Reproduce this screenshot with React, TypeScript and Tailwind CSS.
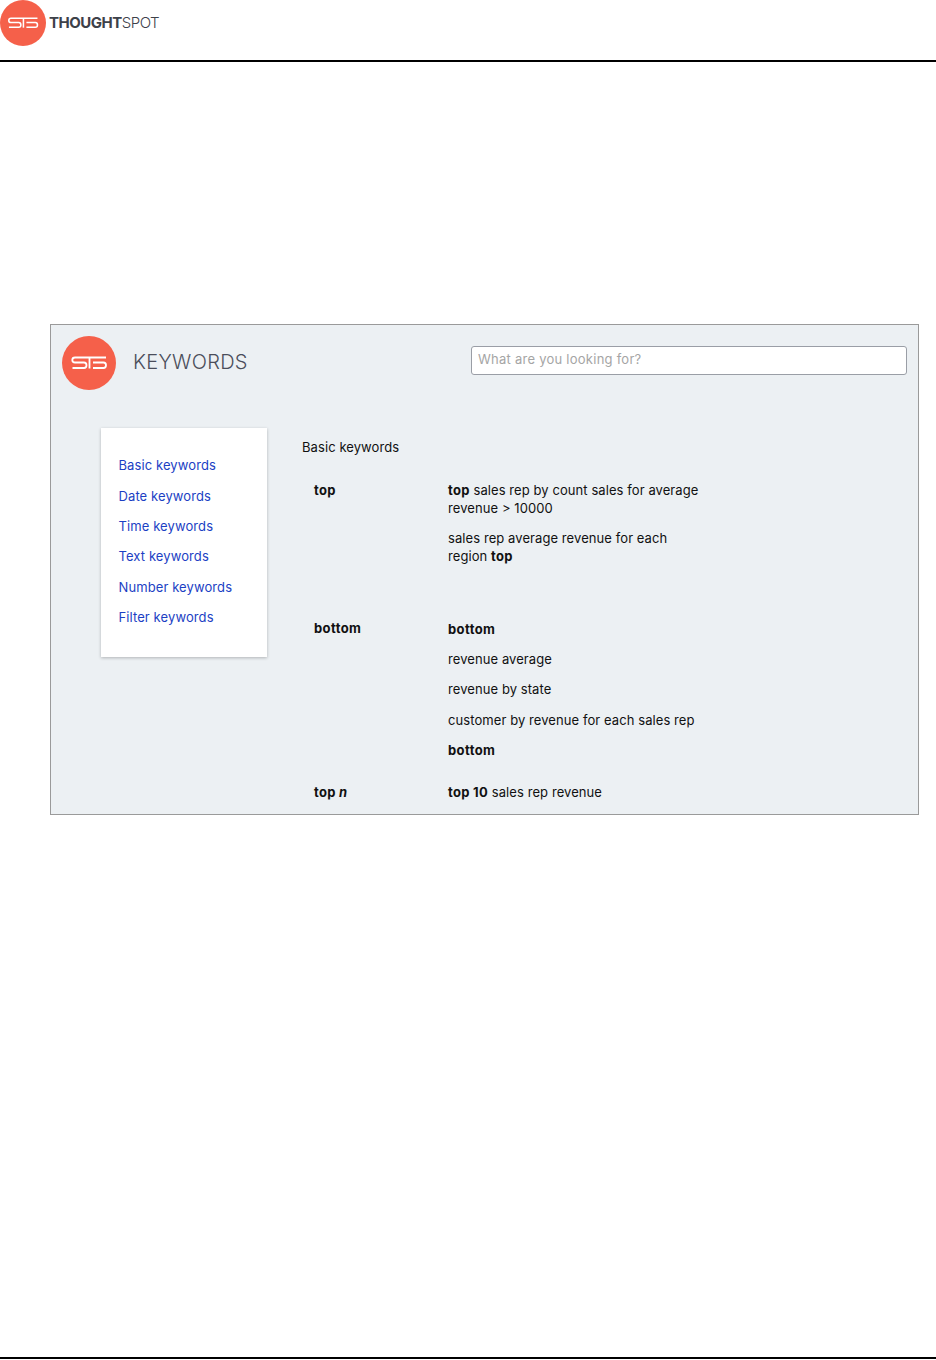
const font = "font-['Inter','Noto_Sans',sans-serif]";

// ST S monogram, white strokes on the orange disc
const StsMark = ({ className }: { className: string }) => (
  <svg viewBox="0 0 54 54" className={className}>
    <circle cx="27" cy="27" r="27" fill="#f5604a" />
    <g fill="none" stroke="#fff" strokeWidth="1.8">
      <path d="M44 21.500H13c-1.600 0-2.700 1-2.700 2.500s1.100 2.500 2.700 2.500h9c1.500 0 2.500 1 2.500 2.800s-1 2.700-2.500 2.700H10.500" />
      <path d="M27.500 21.500V32.500" />
      <path d="M31 26.500h10.500c1.500 0 2.500 1 2.500 2.800s-1 2.700-2.500 2.700H31" />
    </g>
  </svg>
);

const navItems = [
  { label: "Basic keywords", gap: "" },
  { label: "Date keywords", gap: "mt-[13px]" },
  { label: "Time keywords", gap: "mt-[12px]" },
  { label: "Text keywords", gap: "mt-[12px]" },
  { label: "Number keywords", gap: "mt-[13px]" },
  { label: "Filter keywords", gap: "mt-[12px]" },
];

export default function App() {
  return (
    <div className={`${font} flex h-[1360px] w-[936px] flex-col bg-white`}>
      <header className="flex h-[62px] shrink-0 items-start border-b-2 border-black">
        <StsMark className="h-[46px] w-[46px]" />
        <div className="ml-[3px] mt-[13px] text-[15px] leading-[20px] tracking-[-0.5px] text-[#3d4149]">
          <span className="font-bold">THOUGHT</span>
          <span className="font-light">SPOT</span>
        </div>
      </header>

      <main className="flex-1 pl-[50px] pt-[262px]">
        <div className="h-[491px] w-[869px] border border-[#9a9a9a] bg-[#ecf0f3]">
          <div className="flex items-start pl-[11px] pr-[11px] pt-[11px]">
            <StsMark className="h-[54px] w-[54px]" />
            <h1 className="ml-[17px] mt-[13px] text-[20px] leading-[26px] font-light tracking-[0.3px] text-[#4a4d5a]">KEYWORDS</h1>
            <div className="ml-auto mt-[10px] flex h-[29px] w-[436px] items-center rounded-[3px] border border-[#9a9ea6] bg-white pb-px pl-[6px] text-[13px] tracking-[0.25px] text-[#a5a5a5]">
              What are you looking for?
            </div>
          </div>

          <div className="mt-[38px] flex items-start pl-[50px]">
            <nav className="flex h-[229px] w-[166px] flex-col bg-white pl-[17.5px] pt-[28px] shadow-[0_1px_3px_rgba(0,0,0,0.25)]">
              {navItems.map((item) => (
                <a key={item.label} className={`${item.gap} text-[13px] leading-[18px] tracking-[0.1px] text-[#1c3fc4]`}>
                  {item.label}
                </a>
              ))}
            </nav>

            <section className="ml-[35px] text-[13px] leading-[18px] tracking-[0.08px] text-[#111]">
              <p className="mt-[10px]">Basic keywords</p>

              <div className="mt-[25px] flex pl-[12px]">
                <b className="w-[134px] shrink-0 tracking-[0.3px]">top</b>
                <div className="w-[258px]">
                  <p>
                    <b className="tracking-[0.3px]">top</b> sales rep by count sales for average revenue &gt; 10000
                  </p>
                  <p className="mt-[12px] w-[225px]">
                    sales rep average revenue for each region <b className="tracking-[0.3px]">top</b>
                  </p>
                </div>
              </div>

              <div className="mt-[54px] flex pl-[12px]">
                <b className="w-[134px] shrink-0 tracking-[0.4px]">bottom</b>
                <div className="mt-px flex flex-col gap-[12px]">
                  <b className="tracking-[0.4px]">bottom</b>
                  <p>revenue average</p>
                  <p>revenue by state</p>
                  <p className="mt-px">customer by revenue for each sales rep</p>
                  <b className="tracking-[0.4px]">bottom</b>
                </div>
              </div>

              <div className="mt-[24px] flex pl-[12px]">
                <b className="w-[134px] shrink-0 tracking-[0.3px]">
                  top <i>n</i>
                </b>
                <p>
                  <b className="tracking-[0.3px]">top 10</b> sales rep revenue
                </p>
              </div>
            </section>
          </div>
        </div>
      </main>

      <div className="mb-px h-[2px] shrink-0 bg-black" />
    </div>
  );
}
